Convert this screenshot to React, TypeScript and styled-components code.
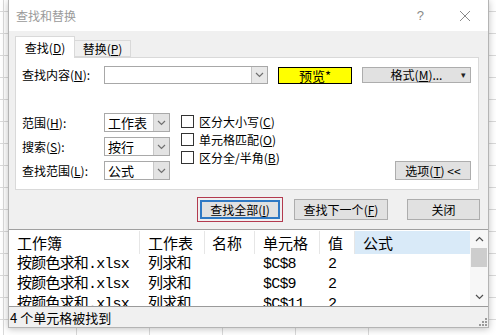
import React from 'react'
import styled, { createGlobalStyle } from 'styled-components'

const GlobalStyle = createGlobalStyle`
	html, body {
		margin: 0;
		padding: 0;
	}
	body {
		width: 496px;
		height: 335px;
		overflow: hidden;
		font-family: "Noto Sans CJK SC", sans-serif;
		background-color: #fff;
		background-image:
			repeating-linear-gradient(to bottom, transparent 0 21px, #dadada 21px 22px),
			repeating-linear-gradient(to right, transparent 0 72px, #dadada 72px 73px);
		background-position: 0 -10px, -69px 0;
	}
`

const Chevron = ({ up = false, color = '#707070' }: { up?: boolean; color?: string }) => (
	<svg width="9" height="6" viewBox="0 0 9 6">
		<polyline
			points={up ? '1,5 4.5,1.5 8,5' : '1,1 4.5,4.5 8,1'}
			fill="none"
			stroke={color}
			strokeWidth="1.2"
		/>
	</svg>
)

// text with an underlined access key, e.g. 查找(D)
const Key = ({ text, k, after = '' }: { text: string; k: string; after?: string }) => (
	<span>
		{text}(<u>{k}</u>){after}
	</span>
)

const rows = [
	{ book: '按颜色求和.xlsx', sheet: '列求和', cell: '$C$8', value: '2' },
	{ book: '按颜色求和.xlsx', sheet: '列求和', cell: '$C$9', value: '2' },
	{ book: '按颜色求和.xlsx', sheet: '列求和', cell: '$C$11', value: '2' },
]

const App = () => {
	return (
		<>
			<GlobalStyle />
			<Dialog>
				<TitleBar>
					<Title>查找和替换</Title>
					<Help>?</Help>
					<CloseX>
						<svg width="12" height="12" viewBox="0 0 12 12">
							<path d="M1 1 L11 11 M11 1 L1 11" stroke="#8a8a8a" strokeWidth="1" />
						</svg>
					</CloseX>
				</TitleBar>

				<TabRow>
					<Tab active>
						<Key text="查找" k="D" />
					</Tab>
					<Tab>
						<Key text="替换" k="P" />
					</Tab>
				</TabRow>

				<Panel>
					<FindRow>
						<Label>
							<Key text="查找内容" k="N" after=":" />
						</Label>
						<Combo>
							<ComboField />
							<ComboDrop>
								<Chevron />
							</ComboDrop>
						</Combo>
						<Preview>预览*</Preview>
						<FormatButton>
							<Key text="格式" k="M" after="..." />
							<Caret>▾</Caret>
						</FormatButton>
					</FindRow>

					<OptionsArea>
						<OptionGrid>
							<Label>
								<Key text="范围" k="H" after=":" />
							</Label>
							<Select>
								<SelectValue>工作表</SelectValue>
								<SelectArrow>
									<Chevron />
								</SelectArrow>
							</Select>
							<Label>
								<Key text="搜索" k="S" after=":" />
							</Label>
							<Select>
								<SelectValue>按行</SelectValue>
								<SelectArrow>
									<Chevron />
								</SelectArrow>
							</Select>
							<Label>
								<Key text="查找范围" k="L" after=":" />
							</Label>
							<Select>
								<SelectValue>公式</SelectValue>
								<SelectArrow>
									<Chevron />
								</SelectArrow>
							</Select>
						</OptionGrid>

						<Checks>
							<CheckRow>
								<Box />
								<Key text="区分大小写" k="C" />
							</CheckRow>
							<CheckRow>
								<Box />
								<Key text="单元格匹配" k="O" />
							</CheckRow>
							<CheckRow>
								<Box />
								<Key text="区分全/半角" k="B" />
							</CheckRow>
						</Checks>

						<OptionsButton>
							<Key text="选项" k="T" after=" <<" />
						</OptionsButton>
					</OptionsArea>
				</Panel>

				<ButtonRow>
					<Highlight>
						<DefaultButton>
							<Key text="查找全部" k="I" />
						</DefaultButton>
					</Highlight>
					<Button width={94} gap={11}>
						<Key text="查找下一个" k="F" />
					</Button>
					<Button width={73} gap={19}>
						关闭
					</Button>
				</ButtonRow>

				<Results>
					<Table>
						<HeaderRow>
							<HeadCell>工作簿</HeadCell>
							<HeadCell>工作表</HeadCell>
							<HeadCell indent={7}>名称</HeadCell>
							<HeadCell>单元格</HeadCell>
							<HeadCell>值</HeadCell>
							<HeadCell selected>公式</HeadCell>
						</HeaderRow>
						{rows.map((r, i) => (
							<DataRow key={i}>
								<Cell>{r.book}</Cell>
								<Cell>{r.sheet}</Cell>
								<Cell />
								<Cell>{r.cell}</Cell>
								<Cell>{r.value}</Cell>
								<Cell />
							</DataRow>
						))}
					</Table>
					<ScrollBar>
						<ScrollArrow>
							<Chevron up color="#505050" />
						</ScrollArrow>
						<Thumb />
						<Track />
						<ScrollArrow>
							<Chevron color="#505050" />
						</ScrollArrow>
					</ScrollBar>
				</Results>

				<StatusBar>
					<span>4 个单元格被找到</span>
					<Grip>
						<svg width="8" height="8" viewBox="0 0 8 8" fill="#9a9a9a">
							<rect x="6" y="0" width="2" height="2" />
							<rect x="3" y="3" width="2" height="2" />
							<rect x="6" y="3" width="2" height="2" />
							<rect x="0" y="6" width="2" height="2" />
							<rect x="3" y="6" width="2" height="2" />
							<rect x="6" y="6" width="2" height="2" />
						</svg>
					</Grip>
				</StatusBar>
			</Dialog>
		</>
	)
}

export default App

const Dialog = styled.div`
	margin-left: 8px;
	width: 481px;
	height: 328px;
	box-sizing: border-box;
	display: flex;
	flex-direction: column;
	background: #f0f0f0;
	border: 1px solid #b4b4b4;
	border-top: none;
	box-shadow: 0 1px 7px rgba(0, 0, 0, 0.25);
	font-size: 12px;
	line-height: 1;
	color: #000;

	u {
		text-decoration-thickness: 1px;
		text-underline-offset: 1px;
	}
`

const TitleBar = styled.div`
	height: 31px;
	flex: none;
	display: flex;
	align-items: center;
	padding-left: 7px;
	background: #fff;
`

const Title = styled.span`
	flex: 1;
	color: #9a9a9a;
	font-size: 12px;
`

const Help = styled.span`
	color: #8a8a8a;
	font-size: 13px;
	font-family: 'Liberation Sans', sans-serif;
	margin-right: 35px;
`

const CloseX = styled.span`
	display: flex;
	margin-right: 17px;
`

const TabRow = styled.div`
	flex: none;
	height: 21px;
	margin: 5px 0 0 6px;
	display: flex;
	align-items: flex-end;
`

const Tab = styled.div<{ active?: boolean }>`
	box-sizing: border-box;
	display: flex;
	align-items: center;
	justify-content: center;
	width: ${(p) => (p.active ? 60 : 56)}px;
	height: ${(p) => (p.active ? 22 : 17)}px;
	margin-bottom: ${(p) => (p.active ? -1 : 0)}px;
	position: relative;
	z-index: ${(p) => (p.active ? 1 : 0)};
	background: ${(p) => (p.active ? '#fff' : '#f0f0f0')};
	border: 1px solid #d9d9d9;
	border-bottom: ${(p) => (p.active ? 'none' : '1px solid #d9d9d9')};
	border-left: ${(p) => (p.active ? '1px solid #d9d9d9' : 'none')};
	padding-top: ${(p) => (p.active ? 1 : 0)}px;
`

const Panel = styled.div`
	flex: none;
	box-sizing: border-box;
	margin-left: 6px;
	width: 464px;
	height: 133px;
	background: #fff;
	border: 1px solid #d9d9d9;
	padding: 8px 7px 0 6px;
	display: flex;
	flex-direction: column;
`

const FindRow = styled.div`
	display: flex;
	align-items: center;
	height: 18px;
`

const Label = styled.span`
	width: 82px;
	flex: none;
	white-space: nowrap;
`

const Combo = styled.div`
	box-sizing: border-box;
	width: 164px;
	height: 18px;
	display: flex;
	border: 1px solid #a8a8a8;
	background: #fff;
`

const ComboField = styled.div`
	flex: 1;
`

const ComboDrop = styled.div`
	width: 15px;
	display: flex;
	align-items: center;
	justify-content: center;
	background: #e8e8e8;
	border-left: 1px solid #c4c4c4;
`

const Preview = styled.div`
	box-sizing: border-box;
	margin-left: 10px;
	width: 74px;
	height: 17px;
	background: #ffff00;
	border: 1px solid #000;
	display: flex;
	align-items: center;
	justify-content: center;
	font-size: 13px;
`

const FormatButton = styled.div`
	box-sizing: border-box;
	margin-left: 10px;
	width: 109px;
	height: 16px;
	background: #e1e1e1;
	border: 1px solid #adadad;
	display: flex;
	align-items: center;
	justify-content: center;
	position: relative;
`

const Caret = styled.span`
	position: absolute;
	right: 4px;
	top: 2px;
	font-size: 9px;
	color: #222;
`

const OptionsArea = styled.div`
	margin-top: 29px;
	display: flex;
`

const OptionGrid = styled.div`
	display: grid;
	grid-template-columns: 82px 66px;
	grid-auto-rows: 19px;
	row-gap: 5px;
	align-items: center;
`

const Select = styled.div`
	box-sizing: border-box;
	height: 19px;
	display: flex;
	border: 1px solid #a9a9a9;
	background: #fff;
`

const SelectValue = styled.span`
	flex: 1;
	display: flex;
	align-items: center;
	padding-left: 3px;
	font-size: 13px;
`

const SelectArrow = styled.span`
	width: 15px;
	display: flex;
	align-items: center;
	justify-content: center;
	background: #e3e3e3;
	border-left: 1px solid #c8c8c8;
`

const Checks = styled.div`
	margin: 2px 0 0 11px;
	display: flex;
	flex-direction: column;
	gap: 5px;
`

const CheckRow = styled.div`
	display: flex;
	align-items: center;
	gap: 5px;
	height: 13px;
	white-space: nowrap;
`

const Box = styled.span`
	box-sizing: border-box;
	width: 13px;
	height: 13px;
	border: 1px solid #333;
	background: #fff;
`

const OptionsButton = styled.div`
	box-sizing: border-box;
	margin-left: auto;
	align-self: flex-end;
	width: 76px;
	height: 19px;
	background: #e1e1e1;
	border: 1px solid #adadad;
	display: flex;
	align-items: center;
	justify-content: center;
	white-space: pre;
`

const ButtonRow = styled.div`
	flex: none;
	margin-top: 7px;
	height: 25px;
	padding-left: 188px;
	display: flex;
	align-items: center;
`

const Highlight = styled.div`
	box-sizing: border-box;
	width: 86px;
	height: 25px;
	border: 1px solid #b33a4f;
	padding: 2px;
	display: flex;
`

const DefaultButton = styled.div`
	flex: 1;
	box-sizing: border-box;
	border: 2px solid #2f79c4;
	background: #e1e1e1;
	display: flex;
	align-items: center;
	justify-content: center;
`

const Button = styled.div<{ width: number; gap: number }>`
	box-sizing: border-box;
	width: ${(p) => p.width}px;
	height: 21px;
	margin-left: ${(p) => p.gap}px;
	background: #e1e1e1;
	border: 1px solid #adadad;
	display: flex;
	align-items: center;
	justify-content: center;
`

const Results = styled.div`
	flex: none;
	box-sizing: border-box;
	margin-top: 7px;
	height: 77px;
	background: #fff;
	border-top: 1px solid #a0a0a0;
	display: flex;
`

const Table = styled.div`
	flex: 1;
	overflow: hidden;
	display: flex;
	flex-direction: column;
`

const columns = 'grid-template-columns: 131px 65px 50px 65px 35px 1fr;'

const HeaderRow = styled.div`
	display: grid;
	${columns}
	flex: none;
	height: 23px;
	padding-top: 1px;
`

const HeadCell = styled.div<{ selected?: boolean; indent?: number }>`
	display: flex;
	align-items: center;
	padding-left: ${(p) => p.indent ?? 8}px;
	font-size: 15px;
	background: ${(p) => (p.selected ? '#d9eaf8' : 'transparent')};
	border-right: ${(p) => (p.selected ? 'none' : '1px solid #e6e6e6')};
`

const DataRow = styled.div`
	display: grid;
	${columns}
	flex: none;
	height: 20px;
`

const Cell = styled.div`
	display: flex;
	align-items: center;
	padding-left: 8px;
	font-family: 'Liberation Mono', 'Noto Sans CJK SC', monospace;
	font-size: 15px;
	letter-spacing: -0.8px;
	white-space: nowrap;
`

const ScrollBar = styled.div`
	width: 18px;
	flex: none;
	display: flex;
	flex-direction: column;
	background: #f7f7f7;
`

const ScrollArrow = styled.div`
	height: 18px;
	display: flex;
	align-items: center;
	justify-content: center;
`

const Thumb = styled.div`
	height: 19px;
	margin: 0 1px;
	background: #cdcdcd;
`

const Track = styled.div`
	flex: 1;
`

const StatusBar = styled.div`
	flex: 1;
	border-top: 1px solid #9a9a9a;
	display: flex;
	align-items: center;
	padding-left: 1px;
	font-size: 13px;
`

const Grip = styled.span`
	align-self: flex-end;
	display: flex;
	margin: 0 1px 1px auto;
`
